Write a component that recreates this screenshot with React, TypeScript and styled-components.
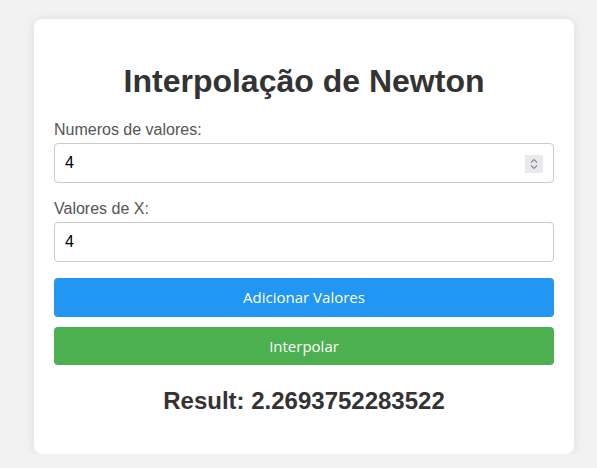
import React, { useState } from "react";
import styled, { createGlobalStyle } from "styled-components";

const GlobalStyle = createGlobalStyle`
  html, body {
    margin: 0;
    padding: 0;
    background: #f2f2f2;
    font-family: "Liberation Sans", Arial, sans-serif;
  }
  * { box-sizing: border-box; }
`;

const Page = styled.div`
  display: flex;
  justify-content: center;
  padding: 19px 0 0 11px;
`;

const Card = styled.div`
  width: 540px;
  background: #ffffff;
  border-radius: 8px;
  box-shadow: 0 0 10px rgba(0, 0, 0, 0.1);
  padding: 20px 20px 20px;
`;

const Title = styled.h1`
  margin: 24px 0 21px;
  font-size: 32px;
  font-weight: bold;
  color: #333333;
  text-align: center;
  line-height: normal;
`;

const Group = styled.div`
  margin-bottom: 16.5px;
`;

const Label = styled.label`
  display: block;
  font-size: 16px;
  color: #555555;
  margin-bottom: 4px;
`;

const Field = styled.div`
  position: relative;
`;

const Input = styled.input`
  display: block;
  width: 100%;
  height: 40px;
  padding: 10px;
  border: 1px solid #cccccc;
  border-radius: 4px;
  font-family: "Liberation Sans", Arial, sans-serif;
  font-size: 16px;
  color: #000000;
  background: #ffffff;
  outline: none;
  -moz-appearance: textfield;
  &::-webkit-inner-spin-button,
  &::-webkit-outer-spin-button {
    -webkit-appearance: none;
    margin: 0;
  }
`;

const Spinner = styled.span`
  position: absolute;
  top: 12px;
  right: 11px;
  width: 18px;
  height: 18px;
  background: #e9e9ed;
  display: flex;
  align-items: center;
  justify-content: center;
`;

const Button = styled.button<{ $bg: string; $mb?: number }>`
  display: block;
  width: 100%;
  height: 38.5px;
  margin-bottom: ${(p) => p.$mb ?? 10}px;
  border: none;
  border-radius: 4px;
  background: ${(p) => p.$bg};
  color: #ffffff;
  font-family: "Open Sans", "Noto Sans", sans-serif;
  font-size: 15px;
  cursor: pointer;
`;

const Result = styled.h2`
  margin: 21.5px 0 19px;
  font-size: 24px;
  font-weight: bold;
  color: #333333;
  text-align: center;
  line-height: normal;
`;

export default function App() {
  const [n, setN] = useState("4");
  const [x, setX] = useState("4");
  return (
    <>
      <GlobalStyle />
      <Page>
        <Card>
          <Title>Interpolação de Newton</Title>
          <Group>
            <Label>Numeros de valores:</Label>
            <Field>
              <Input type="number" value={n} onChange={(e) => setN(e.target.value)} />
              <Spinner>
                <svg width="18" height="18" viewBox="0 0 18 18" fill="none" stroke="#8a8a8e" strokeWidth="1.2">
                  <path d="M6 7.5 L9 4.5 L12 7.5" />
                  <path d="M6 10.5 L9 13.5 L12 10.5" />
                </svg>
              </Spinner>
            </Field>
          </Group>
          <Group>
            <Label>Valores de X:</Label>
            <Input type="text" value={x} onChange={(e) => setX(e.target.value)} />
          </Group>
          <Button $bg="#2196f3">Adicionar Valores</Button>
          <Button $bg="#4caf50" $mb={0}>Interpolar</Button>
          <Result>Result: 2.2693752283522</Result>
        </Card>
      </Page>
    </>
  );
}
